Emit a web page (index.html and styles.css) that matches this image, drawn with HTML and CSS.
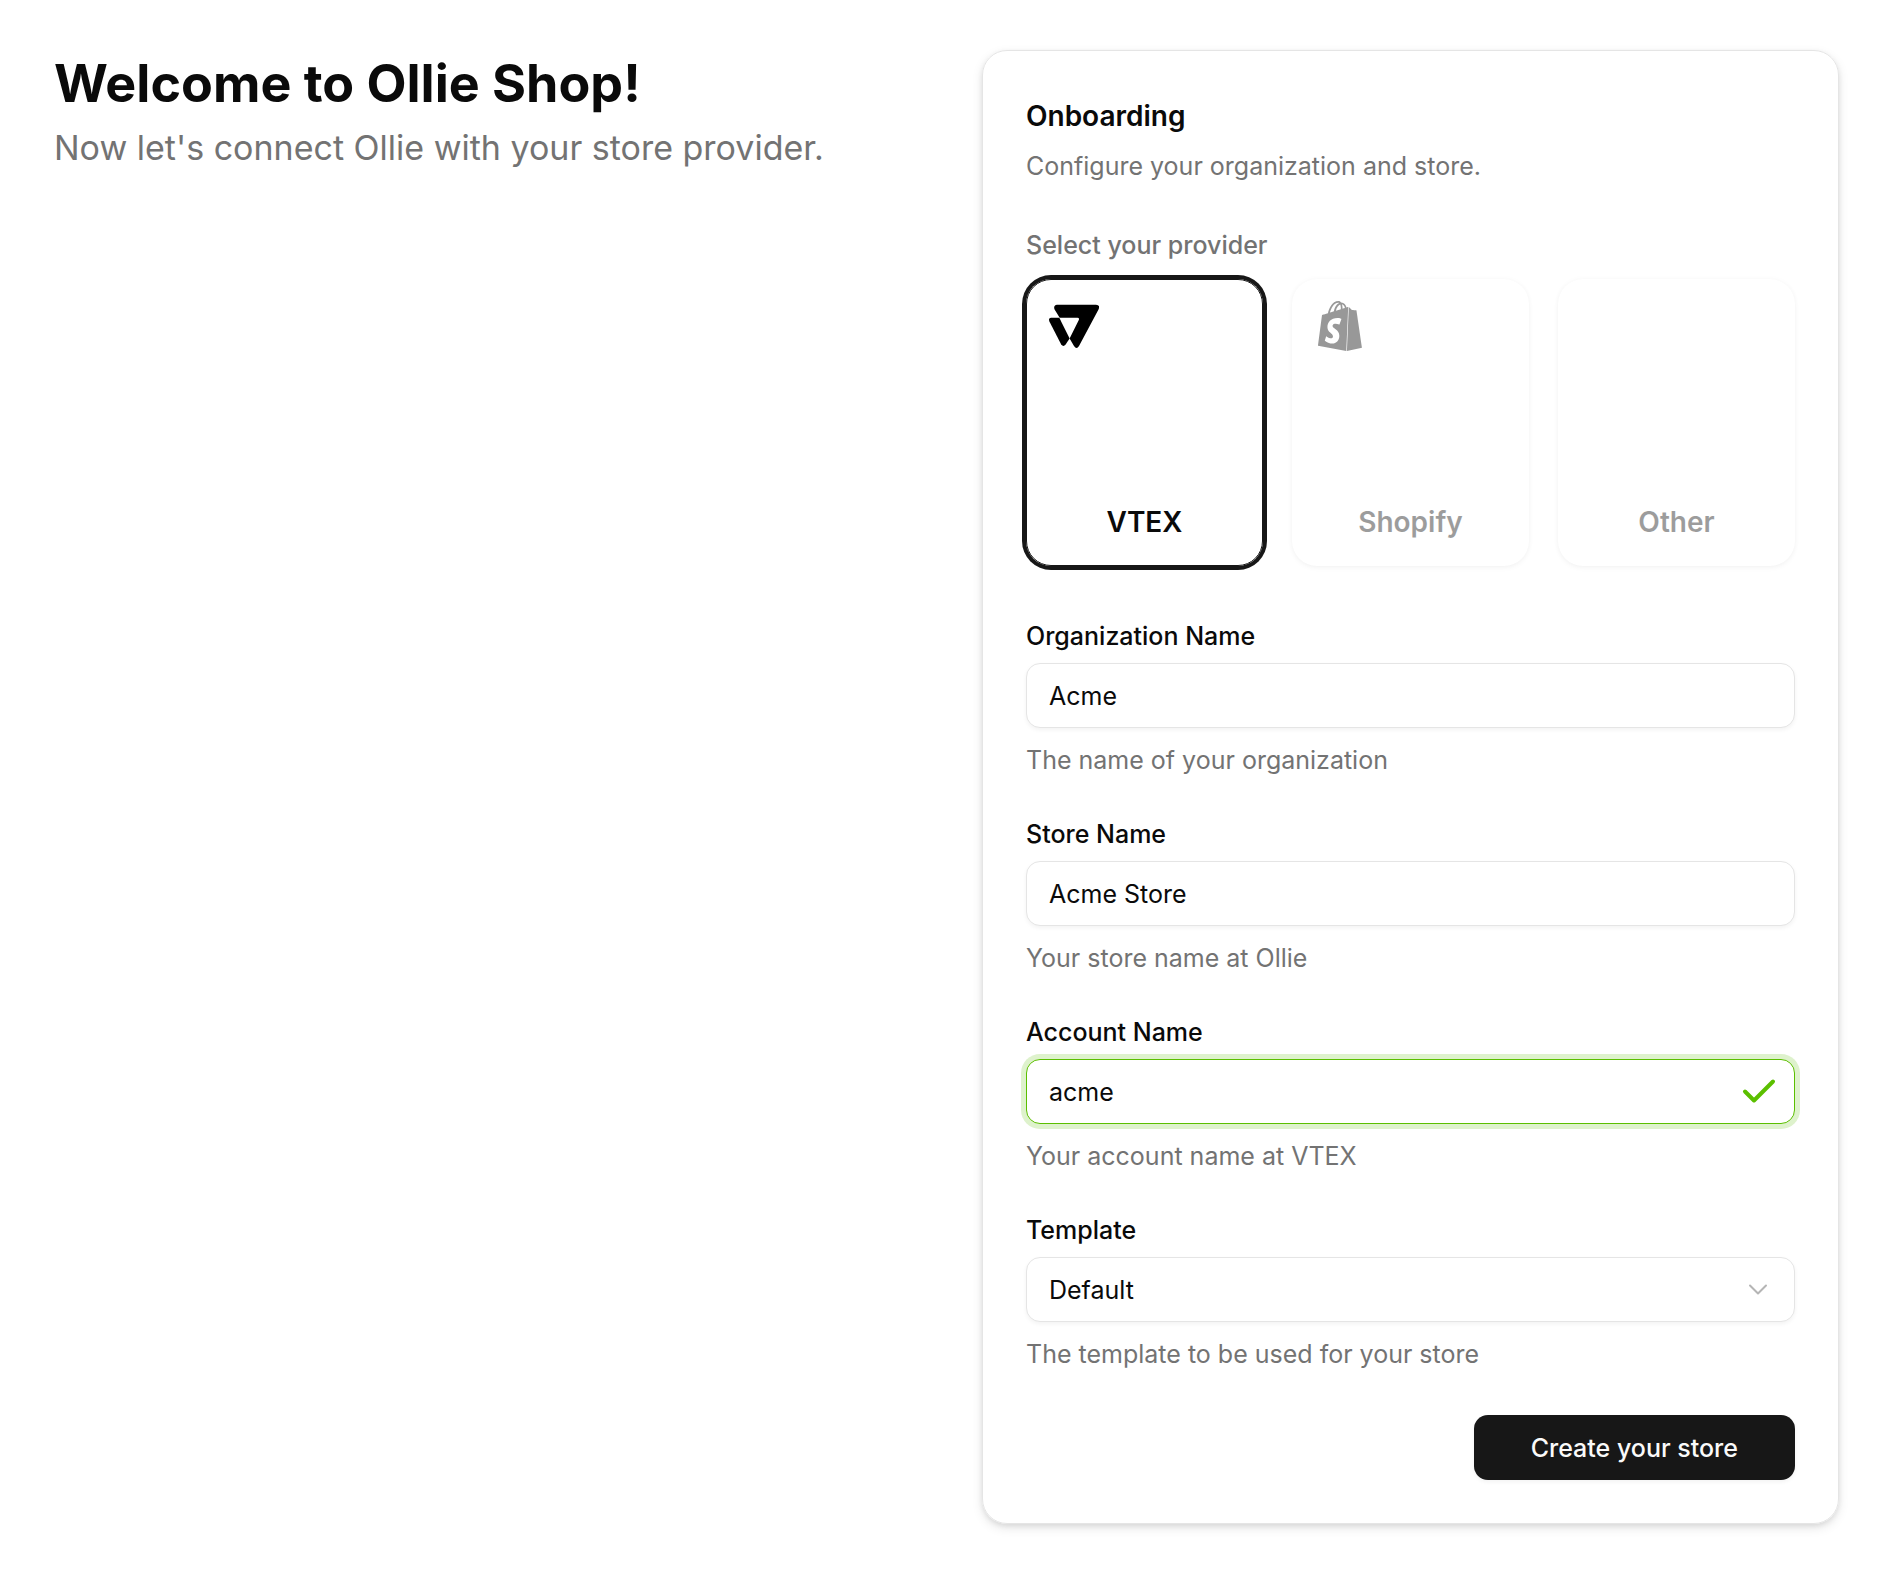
FILE: index.html
```html
<!DOCTYPE html>
<html lang="en">

<head>
    <meta charset="UTF-8">
    <meta name="viewport" content="width=device-width, initial-scale=1.0">
    <link rel="stylesheet" href="styles.css">
    <title>Ollie Shop - Onboarding</title>
</head>

<body>
    <main class="page">
        <header class="intro">
            <h1>Welcome to Ollie Shop!</h1>
            <p>Now let's connect Ollie with your store provider.</p>
        </header>

        <section class="card">
            <div class="card-header">
                <h2>Onboarding</h2>
                <p>Configure your organization and store.</p>
            </div>

            <form>
                <fieldset class="providers">
                    <legend>Select your provider</legend>
                    <div class="provider-list">
                        <label class="provider">
                            <input type="radio" name="provider" value="vtex" checked>
                            <svg class="logo" viewBox="0 0 50 50" aria-hidden="true">
                                <path d="M8 3.7H47Q51.5 4 49.5 8.5L30 45Q27.6 48.8 25 45L20.6 37.4L29.8 19Q30.6 16.8 28.5 16.7H10.7L5.6 8.5Q4 4.300 8 3.700Z" />
                                <path d="M2 16.700H10.300L20.600 37.400L16.600 43.600Q14.400 46.500 12.200 43.600L.4 20.500Q-.900 17 2 16.700Z" />
                            </svg>
                            <span>VTEX</span>
                        </label>
                        <label class="provider">
                            <input type="radio" name="provider" value="shopify" disabled>
                            <svg class="logo" viewBox="0 0 24 24" aria-hidden="true">
                                <path d="M15.337 23.979l7.216-1.561s-2.604-17.613-2.625-17.73c-.018-.116-.114-.192-.211-.192s-1.929-.136-1.929-.136-1.275-1.274-1.439-1.411c-.045-.037-.075-.057-.121-.074l-.914 21.104h.023zM11.71 11.305s-.81-.424-1.774-.424c-1.447 0-1.504.906-1.504 1.141 0 1.232 3.24 1.715 3.24 4.629 0 2.295-1.44 3.76-3.406 3.76-2.354 0-3.54-1.465-3.54-1.465l.646-2.086s1.245 1.066 2.28 1.066c.675 0 .975-.545.975-.932 0-1.619-2.654-1.694-2.654-4.359-.034-2.237 1.571-4.416 4.827-4.416 1.257 0 1.875.361 1.875.361l-.945 2.715-.02.01zM11.17.83c.136 0 .271.038.405.135-.984.465-2.064 1.639-2.508 3.992-.656.213-1.293.405-1.889.578C7.697 3.75 8.951.84 11.17.84V.83zm1.235 2.949v.135c-.754.232-1.583.484-2.394.736.466-1.777 1.333-2.645 2.085-2.971.193.501.309 1.176.309 2.1zm.539-2.234c.694.074 1.141.867 1.429 1.755-.349.114-.735.231-1.158.366v-.252c0-.752-.096-1.371-.271-1.871v.002zm2.992 1.289c-.02 0-.06.021-.078.021s-.289.075-.714.21c-.423-1.233-1.176-2.37-2.508-2.37h-.115C12.135.209 11.669 0 11.265 0 8.159 0 6.675 3.877 6.21 5.846c-1.194.365-2.063.636-2.16.674-.675.213-.694.232-.772.87-.075.462-1.83 14.063-1.83 14.063L15.009 24l.927-21.166z" />
                            </svg>
                            <span>Shopify</span>
                        </label>
                        <label class="provider">
                            <input type="radio" name="provider" value="other" disabled>
                            <span>Other</span>
                        </label>
                    </div>
                </fieldset>

                <div class="field">
                    <label for="organization">Organization Name</label>
                    <input class="control" type="text" id="organization" value="Acme">
                    <p>The name of your organization</p>
                </div>

                <div class="field">
                    <label for="store">Store Name</label>
                    <input class="control" type="text" id="store" value="Acme Store">
                    <p>Your store name at Ollie</p>
                </div>

                <div class="field">
                    <label for="account">Account Name</label>
                    <div class="control-wrap">
                        <input class="control valid" type="text" id="account" value="acme">
                        <svg class="control-icon check" viewBox="0 0 36 36" aria-hidden="true">
                            <path d="M4 18.500L13 27.500L32 8.500" />
                        </svg>
                    </div>
                    <p>Your account name at VTEX</p>
                </div>

                <div class="field">
                    <label for="template">Template</label>
                    <div class="control-wrap">
                        <select class="control" id="template">
                            <option>Default</option>
                        </select>
                        <svg class="control-icon chevron" viewBox="0 0 36 36" aria-hidden="true">
                            <path d="M9 14.500L17 22.500L25 14.500" />
                        </svg>
                    </div>
                    <p>The template to be used for your store</p>
                </div>

                <div class="actions">
                    <button type="submit">Create your store</button>
                </div>
            </form>
        </section>
    </main>
</body>

</html>
```
FILE: styles.css
```css
* {
    box-sizing: border-box;
}

body {
    margin: 0;
    background-color: #fff;
    color: #0a0a0a;
    font-family: Inter, 'Liberation Sans', sans-serif;
    font-size: 25px;
    line-height: 36px;
}

h1,
h2,
p {
    margin: 0;
}

.page {
    display: grid;
    grid-template-columns: 1fr 1fr;
    align-items: start;
    gap: 71px;
    padding: 50px 65px 47px 54px;
}

.intro {
    display: flex;
    flex-direction: column;
    gap: 6px;
}

.intro h1 {
    font-size: 52px;
    font-weight: 700;
    line-height: 67px;
}

.intro p {
    color: #737373;
    font-size: 34px;
    line-height: 50px;
}

.card {
    padding: 43px;
    border: 1px solid #e5e5e5;
    border-radius: 25px;
    box-shadow: 0 2px 5px rgba(0, 0, 0, 0.08), 0 4px 11px rgba(0, 0, 0, 0.1);
}

.card-header {
    display: flex;
    flex-direction: column;
    gap: 9px;
    margin-bottom: 48px;
}

.card-header h2 {
    font-size: 28px;
    font-weight: 600;
    line-height: 45px;
}

.card-header p,
.field p {
    color: #737373;
}

.providers {
    min-width: 0;
    margin: 0 0 57px;
    padding: 0;
    border: 0;
}

.providers legend {
    margin-bottom: 21px;
    padding: 0;
    color: #737373;
    font-weight: 500;
    line-height: 26px;
}

.provider-list {
    display: grid;
    grid-template-columns: repeat(3, 1fr);
    gap: 29px;
}

.provider {
    display: flex;
    flex-direction: column;
    justify-content: space-between;
    height: 287px;
    padding: 21px 22px;
    border: 1px solid transparent;
    border-radius: 25px;
    box-shadow: 0 0 4px rgba(0, 0, 0, 0.06), 0 2px 4px rgba(0, 0, 0, 0.08);
    font-size: 28px;
    font-weight: 600;
    line-height: 43px;
    text-align: center;
    cursor: pointer;
}

.provider input {
    position: absolute;
    opacity: 0;
}

.provider span {
    margin-top: auto;
}

.provider:has(input:checked) {
    border-color: #171717;
    box-shadow: 0 0 0 4px #171717;
}

.provider:has(input:disabled) {
    opacity: 0.4;
    cursor: not-allowed;
}

.logo {
    width: 50px;
    height: 50px;
    fill: #000;
}

.field {
    display: flex;
    flex-direction: column;
    gap: 14px;
    margin-bottom: 43px;
}

.field label {
    font-weight: 500;
    line-height: 26px;
}

.control-wrap {
    position: relative;
}

.control {
    display: block;
    width: 100%;
    height: 65px;
    padding: 0 22px;
    border: 1px solid #e5e5e5;
    border-radius: 14px;
    background-color: #fff;
    box-shadow: 0 2px 4px rgba(0, 0, 0, 0.05);
    color: #0a0a0a;
    font: inherit;
    appearance: none;
}

.control.valid {
    border-color: #5bbf00;
    box-shadow: 0 0 0 5px rgba(91, 191, 0, 0.2);
}

/* sits over the right end of the control */
.control-icon {
    position: absolute;
    top: 14px;
    right: 18px;
    width: 36px;
    height: 36px;
    fill: none;
    stroke-linecap: round;
    stroke-linejoin: round;
    pointer-events: none;
}

.check {
    stroke: #5bbf00;
    stroke-width: 4;
}

.chevron {
    stroke: #b5b5b5;
    stroke-width: 2;
}

.actions {
    display: flex;
    justify-content: flex-end;
}

.actions button {
    height: 65px;
    padding: 0 57px;
    border: none;
    border-radius: 14px;
    background-color: #171717;
    box-shadow: 0 2px 4px rgba(0, 0, 0, 0.05);
    color: #fafafa;
    font: inherit;
    font-weight: 500;
    cursor: pointer;
}

@media only screen and (max-width: 1100px) {
    .page {
        grid-template-columns: 1fr;
    }
}
```
